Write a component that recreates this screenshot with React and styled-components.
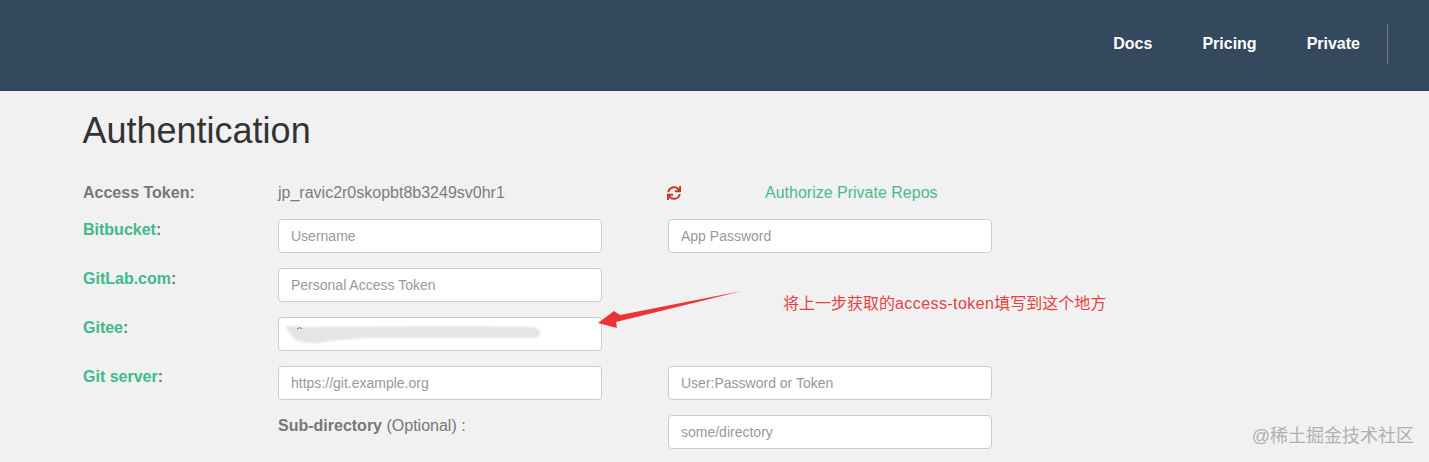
import React from "react";
import styled, { createGlobalStyle } from "styled-components";
import { FaSync } from "react-icons/fa";

const Global = createGlobalStyle`
  html, body { margin: 0; padding: 0; background: #f1f1f1; }
  body { font-family: "Liberation Sans", Arial, sans-serif; width: 1429px; height: 462px; overflow: hidden; position: relative; }
`;

const Header = styled.header`
  height: 91px;
  box-sizing: border-box;
  background: #34495e;
  border-bottom: 1px solid #2f4256;
  display: flex;
  justify-content: flex-end;
  align-items: flex-start;
  padding: 24px 41px 0 0;
`;
const Nav = styled.nav`
  display: flex;
  align-items: center;
  height: 40px;
  border-right: 1px solid #6d7d8d;
  padding-right: 27px;
  gap: 50px;
`;
const NavLink = styled.a`
  color: #fff;
  font-weight: 700;
  font-size: 16px;
  line-height: 40px;
`;
const Main = styled.main`
  padding: 0 0 0 83px;
`;
const Title = styled.h1`
  margin: 18px 0 0 -0.5px;
  font-size: 36px;
  line-height: 44px;
  font-weight: 400;
  color: #333;
`;
const Form = styled.div`
  margin-top: 17px;
  display: grid;
  grid-template-columns: 195px 324px 66px 324px;
  grid-auto-rows: 34px;
  row-gap: 15px;
`;
const TokenRow = styled.div`
  grid-column: 1 / -1;
  display: grid;
  grid-template-columns: 195px 390px 97px auto;
  align-items: center;
  padding-top: 12px;
  font-size: 16px;
`;
const Label = styled.div`
  font-size: 16px;
  line-height: 20px;
  font-weight: 700;
  color: #777;
`;
const GreenLabel = styled(Label)`
  margin-top: 1px;
  a { color: #40ba8a; }
`;
const FieldLabel = styled(Label)`
  margin-top: 1px;
  span { font-weight: 400; }
`;
const Input = styled.input`
  box-sizing: border-box;
  width: 324px;
  height: 34px;
  padding: 0 12px;
  border: 1px solid #ccc;
  border-radius: 4px;
  background: #fff;
  font: 14px "Liberation Sans", Arial, sans-serif;
  color: #555;
  &::placeholder { color: #999; opacity: 1; }
`;
const Refresh = styled.div`
  color: #c0392b;
  display: flex;
  align-items: center;
  font-size: 14px;
  margin-left: -1px;
`;
const AuthLink = styled.a`
  color: #4aba8c;
  font-size: 16px;
`;
const TokenValue = styled.span`
  color: #7d7d7d;
  font-size: 16px;
`;
const Empty = styled.div``;
const GiteeCell = styled.div`
  position: relative;
  width: 324px;
  height: 34px;
`;
const Smear = styled.svg`
  position: absolute;
  left: 0;
  top: 0;
  pointer-events: none;
`;
const Arrow = styled.svg`
  position: absolute;
  left: 590px;
  top: 285px;
  pointer-events: none;
`;
const Note = styled.div`
  position: absolute;
  left: 783px;
  top: 294px;
  font-size: 16px;
  line-height: 20px;
  color: #e9403f;
  font-family: "Liberation Sans", "Noto Sans CJK SC", sans-serif;
  white-space: nowrap;
`;
const Latin = styled.span`
  letter-spacing: 0.42px;
`;
const Watermark = styled.div`
  position: absolute;
  right: 15px;
  top: 425px;
  font-size: 18px;
  line-height: 22px;
  color: #b0b0b0;
  font-family: "Liberation Sans", "Noto Sans CJK SC", sans-serif;
  white-space: nowrap;
`;

const Row = ({ label, first, second }) => (
  <>
    {label}
    {first}
    <Empty />
    {second || <Empty />}
  </>
);

export default function App() {
  return (
    <>
      <Global />
      <Header>
        <Nav>
          <NavLink>Docs</NavLink>
          <NavLink>Pricing</NavLink>
          <NavLink>Private</NavLink>
        </Nav>
      </Header>
      <Main>
        <Title>Authentication</Title>
        <Form>
          <TokenRow>
            <Label>Access Token:</Label>
            <TokenValue>jp_ravic2r0skopbt8b3249sv0hr1</TokenValue>
            <Refresh><FaSync /></Refresh>
            <AuthLink>Authorize Private Repos</AuthLink>
          </TokenRow>
          <Row
            label={<GreenLabel><a>Bitbucket</a>:</GreenLabel>}
            first={<Input placeholder="Username" />}
            second={<Input placeholder="App Password" />}
          />
          <Row
            label={<GreenLabel><a>GitLab.com</a>:</GreenLabel>}
            first={<Input placeholder="Personal Access Token" />}
          />
          <Row
            label={<GreenLabel><a>Gitee</a>:</GreenLabel>}
            first={
              <GiteeCell>
                <Input />
                <Smear width="324" height="34" viewBox="0 0 324 34">
                  <defs>
                    <filter id="b" x="-5%" y="-50%" width="110%" height="200%">
                      <feGaussianBlur stdDeviation="1" />
                    </filter>
                  </defs>
                  <path
                    d="M7 9 L30 10 L180 9 L255 10 Q262 11 262 16 Q262 21 255 21 L90 21 Q60 23 40 26 Q20 27 14 20 Z"
                    fill="#e5e5e5"
                    filter="url(#b)"
                  />
                  <path d="M19 12 q3 -3 5 0" fill="none" stroke="#777" strokeWidth="1" />
                </Smear>
              </GiteeCell>
            }
          />
          <Row
            label={<GreenLabel><a>Git server</a>:</GreenLabel>}
            first={<Input placeholder="https://git.example.org" />}
            second={<Input placeholder="User:Password or Token" />}
          />
          <Row
            label={<Empty />}
            first={<FieldLabel>Sub-directory <span>(Optional) :</span></FieldLabel>}
            second={<Input placeholder="some/directory" />}
          />
        </Form>
      </Main>
      <Arrow width="160" height="50" viewBox="0 0 160 50">
        <path d="M152 6 L30 30 L24 26 L8 38 L27 43 L26 37 Z" fill="#ee3338" />
      </Arrow>
      <Note>将上一步获取的<Latin>access-token</Latin>填写到这个地方</Note>
      <Watermark>@稀土掘金技术社区</Watermark>
    </>
  );
}
